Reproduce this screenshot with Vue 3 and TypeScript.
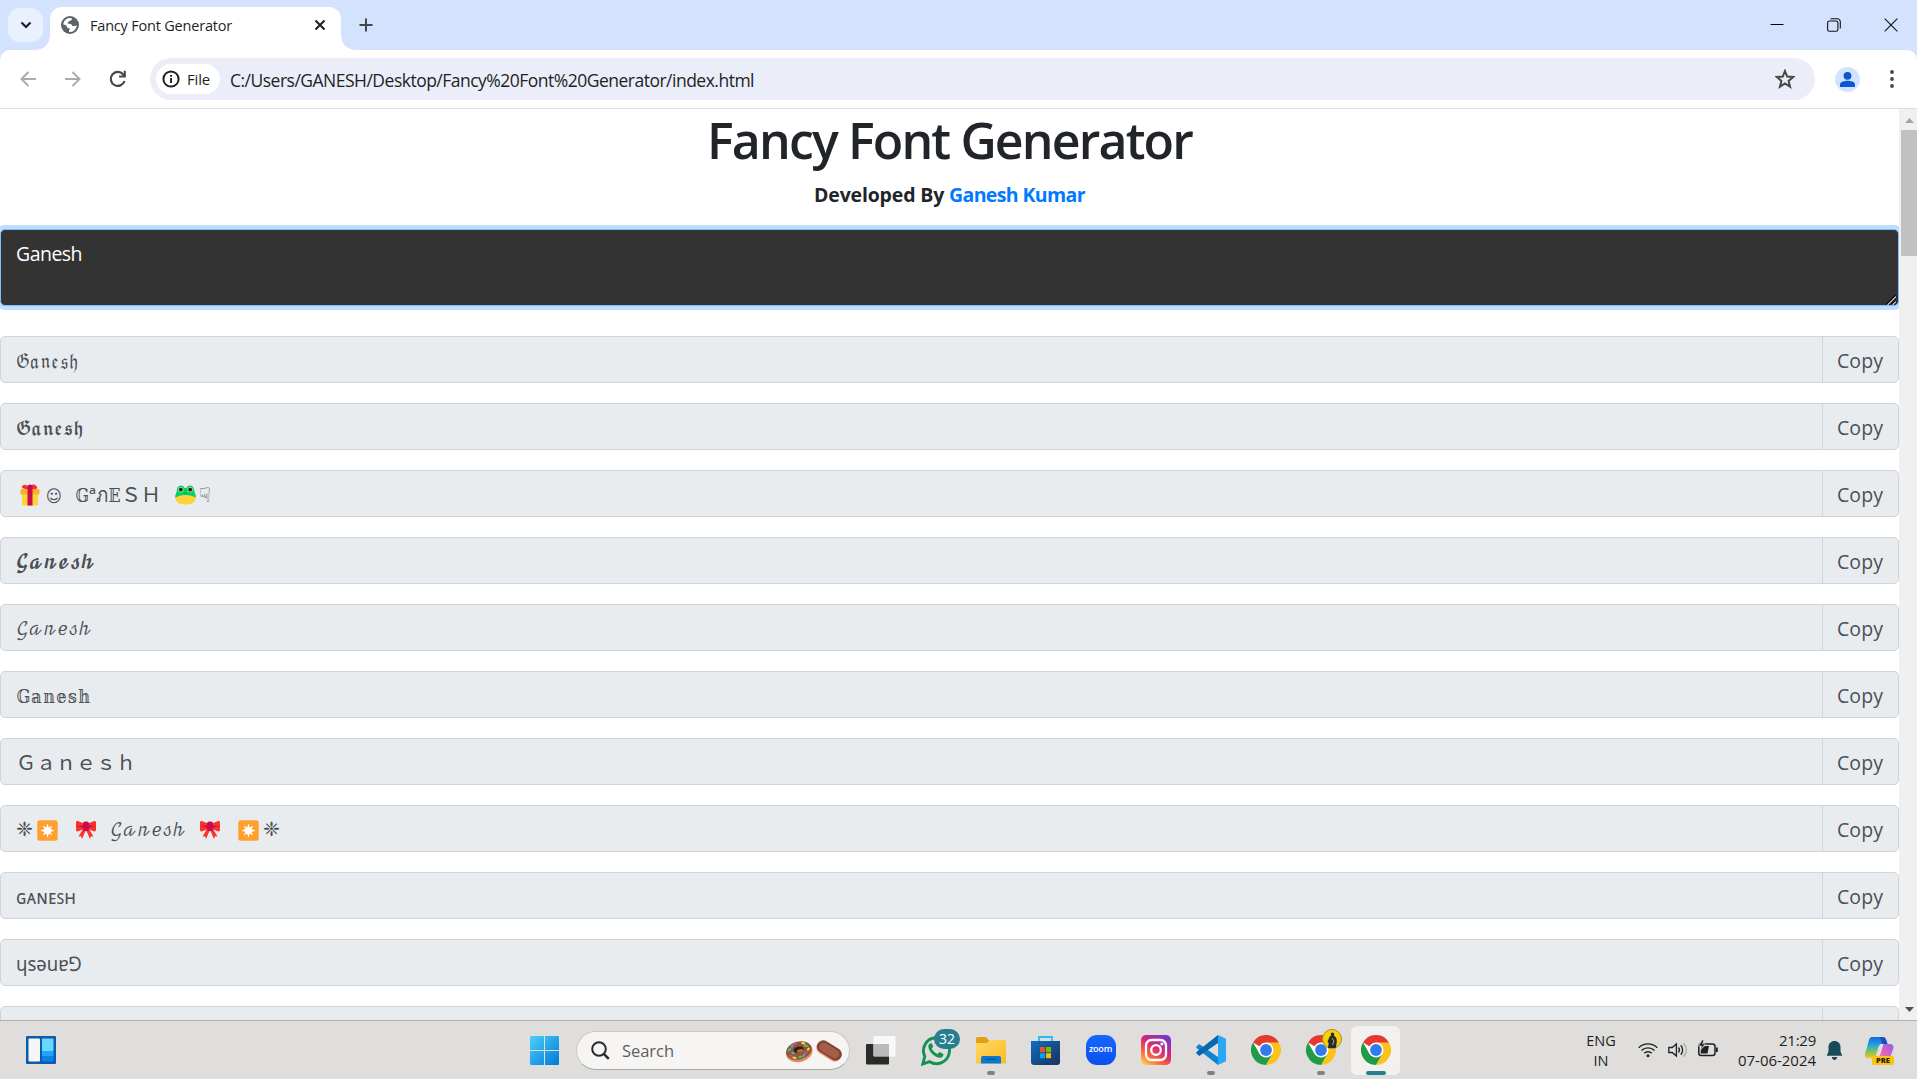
<script setup lang="ts">
import type { Directive } from 'vue'

interface Segment {
  text?: string
  icon?: 'gift' | 'frog' | 'star' | 'bow'
  gap: number
  width: number
  kind?: string
}

const rows: Segment[][] = [
  [{ text: '𝔊𝔞𝔫𝔢𝔰𝔥', gap: 0, width: 62, kind: 'math' }],
  [{ text: '𝕲𝖆𝖓𝖊𝖘𝖍', gap: 0, width: 67, kind: 'math' }],
  [
    { icon: 'gift', gap: 4, width: 20 },
    { text: '☺', gap: 6, width: 16, kind: 'face' },
    { text: '𝔾', gap: 13, width: 14, kind: 'math' },
    { text: 'ª', gap: 0, width: 7, kind: 'plain' },
    { text: 'ภ', gap: 0, width: 12, kind: 'plain' },
    { text: '𝔼', gap: 0, width: 13, kind: 'math' },
    { text: 'Ｓ', gap: 0, width: 20, kind: 'wide' },
    { text: 'Ｈ', gap: 0, width: 20, kind: 'wide' },
    { icon: 'frog', gap: 14, width: 21 },
    { text: '☟', gap: 3, width: 12, kind: 'hand' },
  ],
  [{ text: '𝓖𝓪𝓷𝓮𝓼𝓱', gap: 0, width: 79, kind: 'math script' }],
  [{ text: '𝒢𝒶𝓃𝑒𝓈𝒽', gap: 0, width: 76, kind: 'math script' }],
  [{ text: '𝔾𝕒𝕟𝕖𝕤𝕙', gap: 0, width: 75, kind: 'math' }],
  [{ text: 'Ｇａｎｅｓｈ', gap: 0, width: 120, kind: 'wide' }],
  [
    { text: '❈', gap: 0, width: 17, kind: 'symbol' },
    { icon: 'star', gap: 4, width: 21 },
    { icon: 'bow', gap: 18, width: 20 },
    { text: '𝒢𝒶𝓃𝑒𝓈𝒽', gap: 14, width: 76, kind: 'math script' },
    { icon: 'bow', gap: 14, width: 20 },
    { icon: 'star', gap: 18, width: 21 },
    { text: '❈', gap: 4, width: 17, kind: 'symbol' },
  ],
  [{ text: 'ɢᴀɴᴇꜱʜ', gap: 0, width: 60, kind: 'plain' }],
  [{ text: 'ɥsǝuɐ⅁', gap: 0, width: 66, kind: 'plain' }],
  [],
]

// Tracks a label out or in so that it fills the given number of pixels.
const vFit: Directive<HTMLElement, number> = {
  mounted(el, { value }) {
    const count = Array.from(el.textContent ?? '').length
    el.style.letterSpacing = `${(value - el.getBoundingClientRect().width) / count}px`
  },
}

// Condenses or widens the glyphs of a label to the given number of pixels.
const vStretch: Directive<HTMLElement, number> = {
  mounted(el, { value }) {
    const natural = el.getBoundingClientRect().width
    if (natural > 0) el.style.transform = `scaleX(${value / natural})`
  },
}
</script>

<template>
  <div class="screen">
    <header class="tabs">
      <div class="tab-search">
        <svg width="12" height="8" viewBox="0 0 12 8"><path d="M1.5 1.5 6 6l4.500-4.500" fill="none" stroke="#1f1f1f" stroke-width="2.200" /></svg>
      </div>
      <div class="tab">
        <svg class="favicon" width="18" height="18" viewBox="0 0 18 18">
          <circle cx="9" cy="9" r="9" fill="#5f6368" />
          <path d="M10.800 2.200c.5 2-1 2.600-2.600 2.800-.6 1.600-1.700 1-1.700 2.600 2.200.2 4.600.3 4.900 2.500h2.200c.9 0 1.300-.7 2.200-.5A7 7 0 0 1 8 15.900c-.2-1.600.6-2.300.9-3.600-2 .1-3.200-.6-3.400-2.800L2.100 8.300A7 7 0 0 1 10.800 2.200z" fill="#fff" />
          <path d="M11.500 3.200c1.700.7 2.600 1.500 3.400 3-1.500.6-3.800 1.300-4.900.1-.8-1.500 1-1.600 1.500-3.100z" fill="#5f6368" />
        </svg>
        <span class="tab-title"><span v-fit="142" class="fit">Fancy Font Generator</span></span>
        <svg class="tab-close" width="12" height="12" viewBox="0 0 12 12"><path d="m1.500 1.500 9 9m0-9-9 9" stroke="#1f1f1f" stroke-width="2" /></svg>
      </div>
      <svg class="plus" width="14" height="14" viewBox="0 0 14 14"><path d="M7 .5v13M.5 7h13" stroke="#444746" stroke-width="2" /></svg>
      <div class="window-buttons">
        <svg width="14" height="14" viewBox="0 0 14 14"><path d="M.5 6.500h13" stroke="#000" stroke-width="1" /></svg>
        <svg width="14" height="14" viewBox="0 0 14 14" fill="none" stroke="#111" stroke-width="1.100"><rect x=".6" y="3" width="10.300" height="10.300" rx="1.800" /><path d="M3.500.8h6.800a3 3 0 0 1 3 3v6.700" /></svg>
        <svg width="14" height="14" viewBox="0 0 14 14"><path d="m.7.7 12.600 12.600m0-12.600L.7 13.300" stroke="#111" stroke-width="1.100" /></svg>
      </div>
    </header>

    <nav class="toolbar">
      <svg class="nav" width="16" height="16" viewBox="0 0 16 16" fill="none" stroke="#a9acae" stroke-width="2"><path d="M16 8H2M8.500 1 1.500 8l7 7" /></svg>
      <svg class="nav" width="16" height="16" viewBox="0 0 16 16" fill="none" stroke="#a9acae" stroke-width="2"><path d="M0 8h14M7.500 1l7 7-7 7" /></svg>
      <svg class="nav reload" width="18" height="18" viewBox="0 0 18 18"><path d="M15.500 11A7 7 0 1 1 14 4.200L16 6.300" fill="none" stroke="#444746" stroke-width="2.200" /><path d="M16.800.8v6.700h-6.700v-2.100h4.600V.8z" fill="#444746" /></svg>
      <div class="omnibox">
        <div class="chip">
          <svg width="18" height="18" viewBox="0 0 18 18"><circle cx="9" cy="9" r="7.600" fill="none" stroke="#1f1f1f" stroke-width="2" /><path d="M8.100 8h1.900v5H8.100zM8.100 4.900h1.900v1.900H8.100z" fill="#1f1f1f" /></svg>
          <span class="chip-text"><span v-fit="23" class="fit">File</span></span>
        </div>
        <span class="url"><span v-fit="524" class="fit">C:/Users/GANESH/Desktop/Fancy%20Font%20Generator/index.html</span></span>
        <svg class="bookmark" width="20" height="20" viewBox="0 0 20 20"><path d="m10 2 2.200 5.600 6 .4-4.600 3.900 1.500 5.900L10 14.500l-5.100 3.300 1.500-5.900L1.800 8l6-.4z" fill="none" stroke="#444746" stroke-width="2" /></svg>
      </div>
      <svg class="avatar" width="25" height="25" viewBox="0 0 25 25"><circle cx="12.500" cy="12.500" r="12.500" fill="#d3e3fd" /><circle cx="12.500" cy="8.800" r="3.900" fill="#0b57d0" /><path d="M5 20v-2.500c0-2.700 4.600-3.700 7.500-3.700s7.500 1 7.500 3.700V20z" fill="#0b57d0" /></svg>
      <svg class="more" width="4" height="18" viewBox="0 0 4 18" fill="#444746"><circle cx="2" cy="2" r="1.900" /><circle cx="2" cy="9" r="1.900" /><circle cx="2" cy="16" r="1.900" /></svg>
    </nav>

    <div class="viewport">
      <main class="page">
        <h1><span v-fit="485" class="fit">Fancy Font Generator</span></h1>
        <h5><span v-fit="135" class="fit">Developed By&nbsp;</span><a v-fit="136" class="fit">Ganesh Kumar</a></h5>
        <div class="input">
          <span v-fit="66" class="fit">Ganesh</span>
          <svg class="grip" width="12" height="12" viewBox="0 0 12 12"><path d="m2 12 9-9M7 12l4-4" stroke="#000" stroke-width="3" /><path d="m2.500 12 8.500-8.500M7.500 12l3.500-3.500" stroke="#c8c8c8" stroke-width="1.300" /></svg>
        </div>
        <div v-for="(row, i) in rows" :key="i" class="row">
          <div class="sample">
            <span v-for="(s, j) in row" :key="j" class="segment" :class="s.kind" :style="{ marginLeft: s.gap + 'px', width: s.width + 'px' }">
              <span v-if="s.text" v-stretch="s.width" class="glyphs">{{ s.text }}</span>
              <svg v-else-if="s.icon === 'gift'" width="20" height="22" viewBox="0 0 20 22">
                <path d="M2 8h16v12.500a1 1 0 0 1-1 1H3a1 1 0 0 1-1-1z" fill="#ffd43b" /><rect x=".5" y="5" width="19" height="5.500" rx="1.200" fill="#ffae2e" />
                <path d="M9 5C6 5 2 5 2 3s3-3 5-1.500S9 4 10 5c0-2 2-5 4-4.500S19 4 16 5z" fill="#fb312d" /><path d="M7.500 2.500a2.500 2 0 0 1 5 0v19h-5z" fill="#ca0b4a" />
              </svg>
              <svg v-else-if="s.icon === 'frog'" width="21" height="20" viewBox="0 0 21 20">
                <path d="M2 4.500C2-.5 9-.5 9.500 3h2C12-.5 19-.5 19 4.500c0 2 2 5 2 8H0c0-3 2-6 2-8z" fill="#00d26a" />
                <path d="M.3 13C2 11 7 10 10.500 10S19 11 20.700 13c.2 4.500-4.700 6.500-10.200 6.500S.1 17.500.3 13z" fill="#ffd43b" />
                <circle cx="5.800" cy="4.600" r="2.900" fill="#a2cf7e" /><circle cx="15.200" cy="4.600" r="2.900" fill="#a2cf7e" /><circle cx="5.800" cy="4.600" r="1.900" fill="#222" /><circle cx="15.200" cy="4.600" r="1.900" fill="#222" /><path d="M9 8h.8m1.500 0h.8" stroke="#087a43" />
              </svg>
              <svg v-else-if="s.icon === 'star'" width="21" height="21" viewBox="0 0 21 21">
                <rect x=".3" y=".3" width="20.400" height="20.400" rx="2.500" fill="#ff9f2e" /><path d="m10.500 3.500 1.400 4 3.600-2-2 3.600 4 1.400-4 1.400 2 3.600-3.600-2-1.400 4-1.400-4-3.600 2 2-3.600-4-1.400 4-1.400-2-3.600 3.600 2z" fill="#fff" />
              </svg>
              <svg v-else width="20" height="20" viewBox="0 0 20 20">
                <path d="m7 9-4.500 7.500 2.500-.3 1 2.800L9.500 11h1L14 19l1-2.800 2.500.3L13 9z" fill="#fb312d" /><path d="M0 3c0-2 1-2.300 3-1.500l5 2h4l5-2c2-.8 3-.5 3 1.500v6.500c0 2-1 2.300-3 1.500l-5-2H8l-5 2c-2 .8-3 .5-3-1.500z" fill="#fb312d" />
                <path d="m.3 6.200 6.700-.8v2.200zM19.700 6.200 13 5.400v2.200z" fill="#ca0b4a" /><rect x="7" y="1.500" width="6" height="9.500" rx="2.200" fill="#ca0b4a" />
              </svg>
            </span>
          </div>
          <div class="copy"><span v-if="row.length" v-fit="46" class="fit">Copy</span></div>
        </div>
      </main>
      <aside class="scrollbar">
        <svg class="up" width="9" height="5" viewBox="0 0 9 5"><path d="M0 5 4.500 0 9 5z" fill="#a3a3a3" /></svg>
        <div class="thumb"></div>
        <svg class="down" width="9" height="5" viewBox="0 0 9 5"><path d="M0 0h9L4.500 5z" fill="#505050" /></svg>
      </aside>
    </div>

    <footer class="taskbar">
      <svg width="0" height="0" class="defs">
        <defs>
          <linearGradient id="win" x1="0" y1="0" x2="1" y2="1"><stop offset="0" stop-color="#4cd0fb" /><stop offset="1" stop-color="#0078d7" /></linearGradient>
          <linearGradient id="folder" x1="0" y1="0" x2="1" y2="1"><stop offset="0" stop-color="#ffda64" /><stop offset="1" stop-color="#fcba26" /></linearGradient>
          <linearGradient id="store" x1="0" y1="0" x2="1" y2="1"><stop offset="0" stop-color="#0d70bf" /><stop offset="1" stop-color="#1c2f5c" /></linearGradient>
          <linearGradient id="insta" x1=".1" y1="1" x2=".75" y2="0"><stop offset="0" stop-color="#ffd35a" /><stop offset=".3" stop-color="#fa6535" /><stop offset=".6" stop-color="#d62976" /><stop offset="1" stop-color="#7b35c9" /></linearGradient>
          <linearGradient id="cop1" x1="0" y1="0" x2="0" y2="1"><stop offset="0" stop-color="#1767dc" /><stop offset=".4" stop-color="#24a7dc" /><stop offset=".7" stop-color="#80c455" /><stop offset="1" stop-color="#f4c522" /></linearGradient>
          <linearGradient id="cop2" x1="1" y1="0" x2="0" y2="1"><stop offset="0" stop-color="#8b62ef" /><stop offset=".5" stop-color="#d95fc3" /><stop offset="1" stop-color="#ff8858" /></linearGradient>
          <symbol id="chrome" viewBox="0 0 30 30">
            <circle cx="15" cy="15" r="15" fill="#fff" />
            <path d="M15 15 2 7.500a15 15 0 0 1 26 0z" fill="#e33b2e" /><path d="M15 7.500h13A15 15 0 0 1 15 30l6.500-11.300z" fill="#fcc21b" /><path d="M2 7.500A15 15 0 0 0 15 30l6.500-11.300L15 22l-6.500-3.300z" fill="#219b48" />
            <circle cx="15" cy="15" r="7.500" fill="#fff" /><circle cx="15" cy="15" r="5.900" fill="#337bea" />
          </symbol>
        </defs>
      </svg>
      <div class="widgets">
        <svg width="30" height="28" viewBox="0 0 30 28"><rect width="30" height="28" rx="1" fill="#0c5cab" /><rect x="2.500" y="2.500" width="11.500" height="23" rx="1" fill="#f5f5f7" /><path d="M16 2.500h11.500V15H16z" fill="#68d6ff" /><path d="M16 15h11.500v5.500H16z" fill="#20a4fb" /><path d="M16 20.500h11.500v5H16z" fill="#0784e8" /></svg>
      </div>
      <div class="apps">
        <div class="app start"><svg width="29" height="29" viewBox="0 0 29 29"><path d="M0 1a1 1 0 0 1 1-1h13v14H0zM15 0h13a1 1 0 0 1 1 1v13H15zM0 15h14v14H1a1 1 0 0 1-1-1zM15 15h14v13a1 1 0 0 1-1 1H15z" fill="url(#win)" /></svg></div>
        <div class="search">
          <svg width="19" height="19" viewBox="0 0 19 19" fill="none" stroke="#2b2b2b" stroke-width="2"><circle cx="8" cy="8" r="6.800" /><path d="m12.800 12.800 5 5" stroke-width="2.600" /></svg>
          <span class="search-text"><span v-fit="52" class="fit">Search</span></span>
          <svg class="treats" width="58" height="24" viewBox="0 0 58 24">
            <g transform="rotate(-14 14 12)"><ellipse cx="14" cy="13" rx="13.500" ry="10" fill="#e28c62" /><ellipse cx="14" cy="11.500" rx="13" ry="9" fill="#8a5a34" /><ellipse cx="14" cy="10.500" rx="5" ry="2.800" fill="#35190e" /><ellipse cx="15" cy="12" rx="3.400" ry="1.600" fill="#b8693c" />
              <g stroke-width="2" stroke-linecap="round"><path d="m4 9 2-1m15 0 2 1m-10 9h2" stroke="#4dbf8a" /><path d="m4 14 1 1m14 1 2-1M11 4h2" stroke="#ee4580" /><path d="m7 17 2 1m10-13 2 1m3 6-1 1" stroke="#ffd054" /><path d="m7 12 1 1M8 6l1-1m8 13 1-1" stroke="#49a6ed" /></g></g>
            <g transform="rotate(32 44 12)"><rect x="30.500" y="6.200" width="27" height="12.600" rx="6.300" fill="#e58f6d" /><rect x="30.500" y="5" width="27" height="12.500" rx="6.200" fill="#80432f" /><rect x="33" y="7" width="22" height="9" rx="4.500" fill="#a15e4c" /></g>
          </svg>
        </div>
        <div class="app taskview"><svg width="30" height="29" viewBox="0 0 30 29"><rect x="0" y="8" width="23" height="20.500" rx="1" fill="#2a2a29" /><rect x="7.500" y="0" width="22" height="20.500" rx="1" fill="#f8f8f8" /><path d="M7.500 8H23v12H8.500a1 1 0 0 1-1-1z" fill="#bababa" /></svg></div>
        <div class="app">
          <svg width="30" height="31" viewBox="0 0 30 31"><path d="m1.800 29 2-7.600A13 13 0 1 1 8.600 26.700z" fill="none" stroke="#169154" stroke-width="2.900" /><path d="M10.800 8.500c-1-.8-3.300.3-3.500 3 .5 5 5.500 10.300 11 11.300 3 .2 4.500-2.200 4-3.800L18.600 17l-2.100 2c-2.700-1-4.600-3-5.800-5.500l1.600-1.900z" fill="#169154" /></svg>
          <span class="badge">32</span>
        </div>
        <div class="app">
          <svg width="30" height="27" viewBox="0 0 30 27"><path d="M0 1.500A1.500 1.500 0 0 1 1.500 0H10l3 3.500V8H0z" fill="#e2a113" /><path d="M0 6h11l3-3h15a1 1 0 0 1 1 1v22.500H0z" fill="url(#folder)" /><path d="M5 26.500V21a2 2 0 0 1 2-2h16a2 2 0 0 1 2 2v5.500z" fill="#087bd0" /><path d="M9.500 22.200h11" stroke="#064e8c" stroke-width="1.200" /></svg>
          <i class="dot"></i>
        </div>
        <div class="app"><svg width="29" height="29" viewBox="0 0 29 29"><path d="M8 6V1h13v5" fill="none" stroke="#26bdf5" stroke-width="1.800" /><path d="M0 5h29v21a3 3 0 0 1-3 3H3a3 3 0 0 1-3-3z" fill="url(#store)" /><path d="M9 11h5v5.300H9z" fill="#f25022" /><path d="M15 11h5v5.300h-5z" fill="#7fba00" /><path d="M9 17.200h5v5H9z" fill="#00a4ef" /><path d="M15 17.200h5v5h-5z" fill="#ffb900" /></svg></div>
        <div class="app"><div class="zoom">zoom</div></div>
        <div class="app"><svg width="30" height="30" viewBox="0 0 30 30"><rect width="30" height="30" rx="5" fill="url(#insta)" /><g fill="none" stroke="#fff" stroke-width="2.300"><rect x="5" y="5" width="20" height="20" rx="5.500" /><circle cx="15" cy="15" r="4.800" /></g><circle cx="20.900" cy="9.100" r="1.500" fill="#fff" /></svg></div>
        <div class="app"><svg width="30" height="30" viewBox="0 0 30 30"><path d="M.5 11.500 3.200 9 22 22v8L.8 13.200a1.200 1.200 0 0 1-.3-1.700z" fill="#1084d0" /><path d="M.5 18.500 3.200 21 22 8V0L.8 16.800a1.200 1.200 0 0 0-.3 1.700z" fill="#0869b1" /><path d="M22 0l7 3.200a1.500 1.500 0 0 1 1 1.500v20.600a1.500 1.500 0 0 1-1 1.500L22 30z" fill="#28a8f2" /></svg><i class="dot"></i></div>
        <div class="app"><svg width="30" height="30"><use href="#chrome" /></svg></div>
        <div class="app"><svg width="30" height="30"><use href="#chrome" /></svg>
          <svg class="profile" width="20" height="20" viewBox="0 0 20 20"><circle cx="10" cy="10" r="9.500" fill="#f8cf0b" stroke="#a88d24" /><path d="M10.500 3.500c1.500 0 2 1.500 1.500 3.200 2 1.200 3 3 2.800 6.300l-1 6H6l.7-5-1.200-1 2-5.300 1.500-1c-.5-2 0-3.200 1.500-3.200z" fill="#292929" /><path d="m10 9 2 3-1.500 4" stroke="#aaa" fill="none" /></svg><i class="dot"></i></div>
        <div class="app active"><svg width="30" height="30"><use href="#chrome" /></svg><i class="dot wide-dot"></i></div>
      </div>
      <div class="tray">
        <div class="language"><span>ENG</span><span>IN</span></div>
        <svg class="wifi" width="20" height="16" viewBox="0 0 20 16" fill="none" stroke="#202020" stroke-width="1.400"><path d="M.7 5.800a13 13 0 0 1 18.600 0M3.500 8.600a9.200 9.200 0 0 1 13 0M6.200 11.300a5.400 5.400 0 0 1 7.600 0" /><circle cx="10" cy="13.800" r="1.500" fill="#202020" stroke="none" /></svg>
        <svg class="speaker" width="20" height="16" viewBox="0 0 20 16" fill="none" stroke="#202020" stroke-width="1.300"><path d="M.8 5.500h3.400L8.400 2v12l-4.200-3.500H.8z" /><path d="M10.500 5.500a4 4 0 0 1 0 5M12.800 3.300a7 7 0 0 1 0 9.400" /><path d="M15.500 1.200a9.500 9.500 0 0 1 0 13.600" stroke="#aaa" /></svg>
        <svg class="battery" width="20" height="17" viewBox="0 0 20 17"><rect x=".8" y="4" width="16.200" height="11.500" rx="2.500" fill="none" stroke="#202020" stroke-width="1.500" /><path d="M2.800 9 7 6h4l-1.500 7.500H2.800zM18 7.500h1.800v4.500H18z" fill="#202020" /><path d="M4 0 .5 6h3L2.500 10l4.800-6H4.500L6 0z" fill="#202020" stroke="#dfdedc" stroke-width=".7" /></svg>
        <div class="clock"><span v-fit="37" class="fit">21:29</span><span v-fit="78" class="fit">07-06-2024</span></div>
        <svg class="bell" width="17" height="19" viewBox="0 0 17 19"><path d="M8.500 0C12 0 14.500 2.600 14.500 6v4.500l1.800 4.300H.7l1.800-4.300V6C2.500 2.600 5 0 8.500 0zM5.700 16h5.600c-.4 2-1.600 3-2.800 3s-2.400-1-2.800-3z" fill="#174b59" /></svg>
        <div class="copilot">
          <svg width="29" height="28" viewBox="0 0 29 28"><path d="M7 0h10c3 0 4 2 4.500 4l1 3H17c-2 0-3 1-3.500 3L11 18c-.6 2-2 3-4 3H3c-2.500 0-3.500-2-2.800-4.500L4 3c.6-2 1.500-3 3-3z" fill="url(#cop1)" /><path d="M15 0h3c2 0 3 2 3.500 4l1 3H17z" fill="#184fc5" /><path d="M24 7c4 0 5 2 4.200 5L26 18c-.7 2-2 3-4 3H10c2 0 3-2 3.500-3.500L16 9.500C16.600 8 17.500 7 19 7z" fill="url(#cop2)" /><path d="m16.500 7.500 2-.5-3.500 11-2.500 3H10c2-.5 3-2 3.500-3.500z" fill="#fff" opacity=".8" /></svg>
          <span class="pre">PRE</span>
        </div>
      </div>
    </footer>
  </div>
</template>

<style>
body { margin: 0; overflow: hidden; }
</style>

<style scoped>
* { box-sizing: border-box; }
svg { display: block; flex: none; }
.screen { width: 1917px; height: 1079px; overflow: hidden; display: flex; flex-direction: column; background: #d3e3fd; font-family: "Open Sans", "Noto Sans", sans-serif; color: #1f1f1f; }
.fit { display: inline-block; white-space: nowrap; }

.tabs { height: 50px; flex: none; display: flex; padding-left: 8px; }
.tab-search { width: 35px; height: 34px; margin-top: 8px; border-radius: 12px; background: #e9f0fe; display: flex; align-items: center; justify-content: center; }
.tab { position: relative; width: 291px; height: 43px; margin: 7px 0 0 7px; border-radius: 12px 12px 0 0; background: #fff; display: flex; align-items: center; padding: 0 15px 7px 11px; }
.tab::before, .tab::after { content: ""; position: absolute; bottom: 0; width: 14px; height: 14px; }
.tab::before { left: -14px; background: radial-gradient(circle at 0 0, transparent 13.500px, #fff 14px); }
.tab::after { right: -14px; background: radial-gradient(circle at 100% 0, transparent 13.500px, #fff 14px); }
.tab-title { margin-left: 11px; flex: 1; font-size: 14.500px; line-height: 20px; padding-top: 2px; }
.plus { margin: 18px 0 0 18px; }
.window-buttons { display: flex; gap: 43px; margin: 18px 19px 0 auto; }

.toolbar { height: 59px; flex: none; display: flex; align-items: center; background: #fff; border-bottom: 1px solid #dedfe1; border-radius: 10px 10px 0 0; padding-left: 20px; }
.nav { margin-right: 29px; }
.nav + .nav { margin-right: 28px; }
.nav.reload { margin-right: 23px; }
.omnibox { width: 1665px; height: 42px; border-radius: 21px; background: #ebeef8; display: flex; align-items: center; padding: 0 20px 0 6px; }
.chip { width: 64px; height: 30px; border-radius: 15px; background: #fff; display: flex; align-items: center; padding-left: 6px; }
.chip-text { margin-left: 7px; font-size: 15px; line-height: 20px; }
.url { margin-left: 10px; flex: 1; font-size: 17.500px; line-height: 24px; padding-top: 1px; }
.avatar { margin-left: 20px; }
.more { margin-left: 30px; }

.viewport { height: 911px; flex: none; display: flex; background: #fff; overflow: hidden; }
.page { width: 1899px; height: 911px; overflow: hidden; color: #212529; }
h1 { margin: 0; height: 74px; text-align: center; font-size: 50px; font-weight: 570; line-height: 63px; }
h5 { margin: 0; height: 46px; text-align: center; font-size: 19.500px; font-weight: 700; line-height: 24px; }
h5 a { color: #007bff; }
.input { position: relative; height: 77px; margin-bottom: 30px; padding: 8px 15px; border: 1px solid #80bdff; border-radius: 5px; background: #333; box-shadow: 0 0 0 4px #bfdeff; color: #fff; font-size: 19.500px; line-height: 32px; }
.grip { position: absolute; right: 1px; bottom: 0; }
.row { height: 47px; margin-bottom: 20px; display: flex; border: 1px solid #ced4da; border-radius: 5px; background: #e9ecef; color: #495057; font-size: 20px; overflow: hidden; }
.sample { flex: 1; display: flex; align-items: center; padding-left: 15px; }
.segment { display: flex; align-items: center; height: 45px; line-height: 45px; white-space: nowrap; }
.segment svg { margin-top: 3px; }
.glyphs { display: inline-block; transform-origin: left center; }
.math { font-family: "DejaVu Math TeX Gyre", "DejaVu Serif", "DejaVu Sans", serif; font-size: 19px; }
.math .glyphs { margin-top: 6px; }
.script { font-size: 18px; }
.symbol { font-family: "DejaVu Sans", sans-serif; }
.symbol .glyphs { margin-top: 2px; }
.face { font-family: "DejaVu Sans", sans-serif; font-size: 17px; }
.face .glyphs { margin-top: 6px; }
.hand { font-family: "DejaVu Sans", sans-serif; font-weight: 700; }
.hand .glyphs { margin-top: 3px; }
.wide { font-family: "Noto Sans CJK JP", sans-serif; }
.plain { font-family: "Noto Sans", "DejaVu Sans", sans-serif; }
.plain .glyphs { margin-top: 2px; }
.copy { width: 76px; border-left: 1px solid #ced4da; padding: 1px 0 0 14px; font-size: 19.500px; line-height: 45px; }
.scrollbar { width: 18px; background: #f0f0f0; display: flex; flex-direction: column; align-items: flex-end; }
.up { margin: 9px 3px 7px 0; }
.thumb { width: 16px; height: 126px; background: #c1c1c1; }
.down { margin: auto 3px 8px 0; }

.taskbar { position: relative; height: 59px; flex: none; display: flex; align-items: flex-start; background: #dfdedc; border-top: 1px solid #b2b0ae; }
.defs { position: absolute; }
.widgets { width: 517px; padding: 15px 0 0 26px; }
.apps { display: flex; }
.app { position: relative; width: 55px; height: 58px; display: flex; align-items: center; justify-content: center; }
.search { width: 274px; height: 39px; margin: 10px 3px 0 4px; border-radius: 20px; border: 1px solid #cac9c7; border-bottom-color: #aaa; background: #f6f5f4; display: flex; align-items: center; padding: 0 6px 0 14px; }
.search-text { flex: 1; margin-left: 12px; font-size: 16.500px; color: #5f5e5d; line-height: 24px; }
.badge { position: absolute; left: 26px; top: 8px; width: 26px; height: 20px; border-radius: 10px; background: #267f8f; color: #fff; font-size: 14px; line-height: 20px; text-align: center; }
.dot { position: absolute; left: 24px; bottom: 4px; width: 8px; height: 4px; border-radius: 2px; background: #828180; }
.zoom { width: 30px; height: 30px; border-radius: 11px; background: linear-gradient(#1667ff, #0b50ed); color: #fff; font: 600 9px/28px "Open Sans", sans-serif; text-align: center; letter-spacing: -.2px; }
.profile { position: absolute; left: 29px; top: 8px; }
.active::before { content: ""; position: absolute; left: 3px; top: 5px; width: 49px; height: 49px; border-radius: 6px; background: #f2f1f0; }
.active svg { position: relative; }
.wide-dot { left: 18px; width: 20px; background: #267f8f; }
.tray { flex: 1; display: flex; height: 58px; align-items: flex-start; font-size: 15px; line-height: 20px; color: #1e1e1e; }
.language { width: 32px; margin: 10px 0 0 182px; display: flex; flex-direction: column; align-items: center; font-size: 14.500px; }
.wifi { margin: 21px 0 0 21px; }
.speaker { margin: 21px 0 0 10px; }
.battery { margin: 19px 0 0 10px; }
.clock { width: 79px; margin: 9px 0 0 19px; display: flex; flex-direction: column; align-items: flex-end; }
.bell { margin: 20px 0 0 10px; }
.copilot { position: relative; margin: 16px 0 0 22px; }
.pre { position: absolute; left: 7px; bottom: 0; width: 22px; height: 9px; border-radius: 2px; background: #fcc40c; color: #222; font-size: 7.500px; font-weight: 800; line-height: 9px; text-align: center; }
</style>
